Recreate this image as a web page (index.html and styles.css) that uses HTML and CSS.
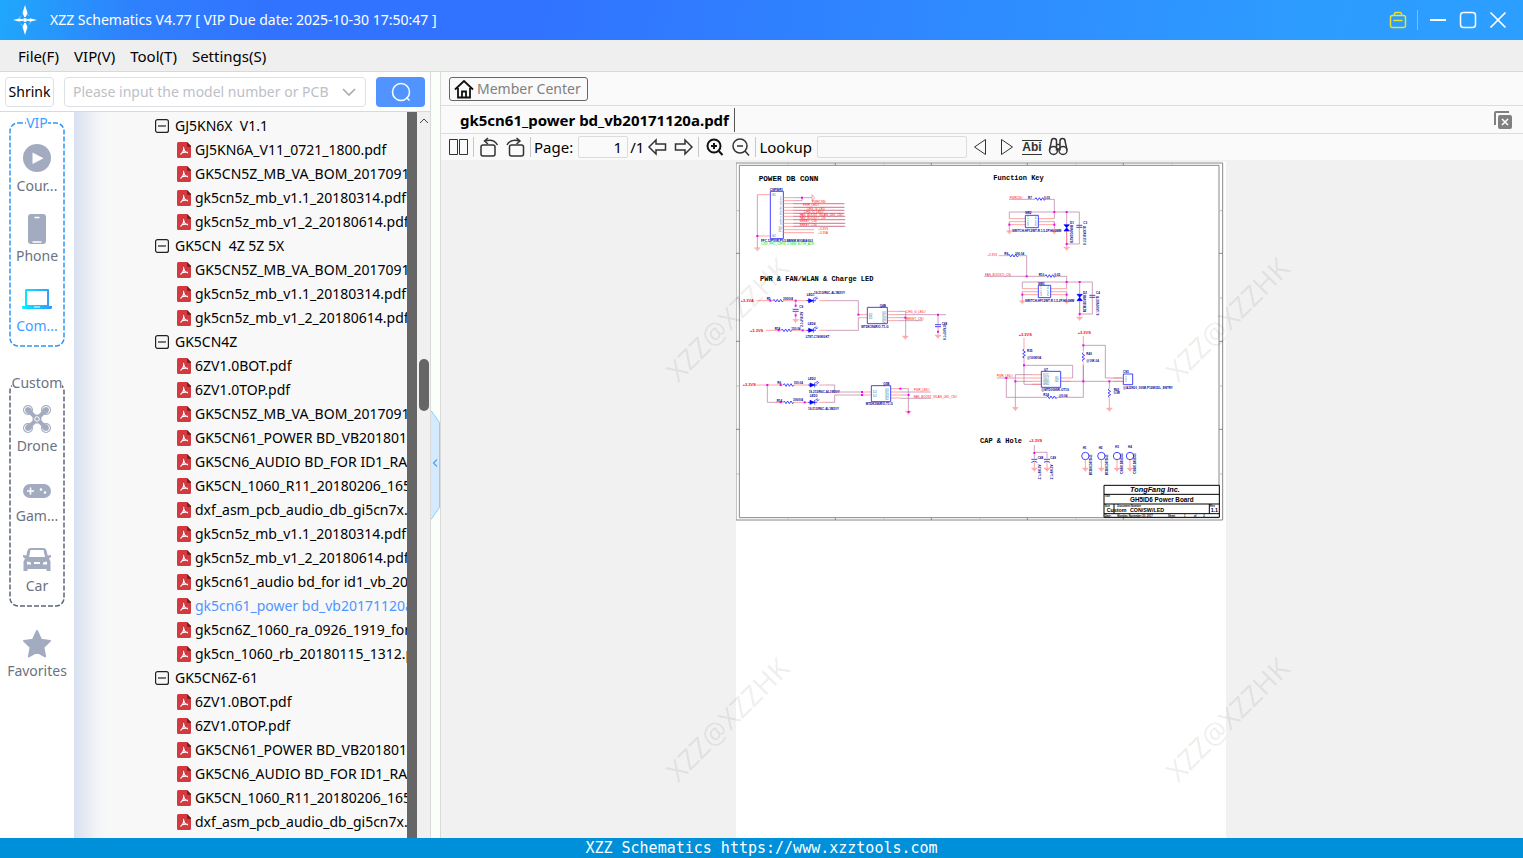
FILE: index.html
```html
<!doctype html>
<html lang="en">
  <head>
    <meta charset="utf-8">
    <meta name="viewport" content="width=device-width, initial-scale=1">
    <title>XZZ Schematics V4.77</title>
    <link rel="stylesheet" href="styles.css">
  </head>

  <body>
    <!-- shared icons -->
    <svg class="defs" width="0" height="0">
      <defs>
        <linearGradient id="cyan" x1="0" x2="1" y1="0" y2="0">
          <stop offset="0" stop-color="#00f0ff"/>
          <stop offset="1" stop-color="#3396ff"/>
        </linearGradient>
        <symbol id="pdf" viewBox="0 0 14 16">
          <path fill="#d23a41" d="M1.500 0H10l4 4v10.500a1.500 1.500 0 0 1-1.500 1.500h-11A1.500 1.500 0 0 1 0 14.500v-13A1.500 1.500 0 0 1 1.500 0z"/>
          <path fill="#8c1a20" d="M10 0l4 4v1h-3a1 1 0 0 1-1-1z"/>
          <path fill="none" stroke="#fff" stroke-width="1.100" d="M6.500 5c1 2-.5 5.500-3 7.500M6.800 6.500c.2 2 2 3.800 4 4.500M4.500 11c2-1 4-1.200 6.500-.6"/>
        </symbol>
        <symbol id="minus" viewBox="0 0 14 14">
          <rect x=".6" y=".6" width="12.800" height="12.800" rx="2" fill="#f8f8f8" stroke="#222" stroke-width="1.200"/>
          <path stroke="#222" stroke-width="1.200" d="M3 7h8"/>
        </symbol>
      </defs>
    </svg>

    <header class="titlebar">
      <svg class="logo" width="26" height="30" viewBox="0 0 26 30">
        <circle cx="13" cy="15" r="6" fill="none" stroke="#7fc8ff" stroke-width="1" stroke-dasharray="5 4"/>
        <path fill="#fff" d="M13 0l2.500 8-1.800 4h-1.400l-1.800-4zM13 30l2.500-8-1.800-4h-1.400l-1.800 4zM1 15l6-1.500 4 .8v1.400l-4 .8zM25 15l-6-1.500-4 .8v1.400l4 .8z"/>
        <circle cx="13" cy="15" r="2" fill="#fff"/>
      </svg>
      <span class="caption">XZZ Schematics V4.77 [ VIP Due date: 2025-10-30 17:50:47 ]</span>
      <button class="win" aria-label="License">
        <svg width="18" height="18" viewBox="0 0 18 18" fill="none" stroke="#e6e22e" stroke-width="1.500">
          <rect x="1.500" y="4.500" width="15" height="12" rx="2"/>
          <path d="M5.500 4.500V3a1.500 1.500 0 0 1 1.500-1.500h4A1.500 1.500 0 0 1 12.500 3v1.500M4.500 9.500h9"/>
        </svg>
      </button>
      <span class="winsep"></span>
      <button class="win" aria-label="Minimize">
        <svg width="18" height="18" stroke="#fff" stroke-width="2"><path d="M1 9h16"/></svg>
      </button>
      <button class="win" aria-label="Maximize">
        <svg width="18" height="18" fill="none" stroke="#fff" stroke-width="1.500"><rect x="1.500" y="1.500" width="15" height="15" rx="3"/></svg>
      </button>
      <button class="win" aria-label="Close">
        <svg width="18" height="18" stroke="#fff" stroke-width="1.700"><path d="M1.500 1.500l15 15M16.500 1.500l-15 15"/></svg>
      </button>
    </header>

    <nav class="menubar">
      <a href="#">File(F)</a>
      <a href="#">VIP(V)</a>
      <a href="#">Tool(T)</a>
      <a href="#">Settings(S)</a>
    </nav>

    <main class="main">
      <section class="left">
        <div class="search">
          <button class="shrink">Shrink</button>
          <div class="combo">
            <input type="text" aria-label="Model number" placeholder="Please input the model number or PCB">
            <svg width="14" height="8" fill="none" stroke="#a6a9b0" stroke-width="1.600"><path d="M1 1l6 6 6-6"/></svg>
          </div>
          <button class="go" aria-label="Search">
            <svg width="20" height="20" fill="none" stroke="#fff" stroke-width="1.500"><circle cx="10" cy="10" r="8.500"/><path d="M15.500 15.500l3 3"/></svg>
          </button>
        </div>

        <div class="browser">
          <aside class="sidebar">
            <div class="group vip">
              <svg class="frame"><rect/></svg>
              <span class="legend">VIP</span>
              <a class="item" href="#">
                <svg viewBox="0 0 32 32"><circle cx="16" cy="15" r="14" fill="#a2abbf"/><path fill="#fff" d="M11.500 9.500v11.500l11-5.750z"/></svg>
                Cour...
              </a>
              <a class="item" href="#">
                <svg viewBox="0 0 32 32"><rect x="7" y="1" width="18" height="30" rx="3" fill="#a2abbf"/><path stroke="#fff" stroke-width="1.400" stroke-linecap="round" d="M14 4.500h4M12 29h8"/></svg>
                Phone
              </a>
              <a class="item active" href="#">
                <svg viewBox="0 0 32 32"><path fill="url(#cyan)" fill-rule="evenodd" d="M5 6h22a1 1 0 0 1 1 1v16h3v2l-1 1H2l-1-1v-2h3V7a1 1 0 0 1 1-1zM6 8v14h20V8zM13 23.500v1h6v-1z"/></svg>
                Com...
              </a>
            </div>

            <div class="group custom">
              <svg class="frame"><rect/></svg>
              <span class="legend">Custom</span>
              <a class="item" href="#">
                <svg viewBox="0 0 32 32">
                  <g fill="#a2abbf"><circle cx="7" cy="7" r="5"/><circle cx="25" cy="7" r="5"/><circle cx="7" cy="25" r="5"/><circle cx="25" cy="25" r="5"/></g>
                  <path stroke="#a2abbf" stroke-width="4" d="M8 8l16 16M24 8L8 24"/>
                  <g fill="none" stroke="#fff"><circle cx="7" cy="7" r="3.500"/><circle cx="25" cy="7" r="3.500"/><circle cx="7" cy="25" r="3.500"/><circle cx="25" cy="25" r="3.500"/></g>
                  <g fill="#a2abbf"><circle cx="8" cy="8" r="3"/><circle cx="24" cy="8" r="3"/><circle cx="8" cy="24" r="3"/><circle cx="24" cy="24" r="3"/><circle cx="16" cy="16" r="4.500"/></g>
                  <circle cx="16" cy="16" r="2.300" fill="none" stroke="#fff"/>
                </svg>
                Drone
              </a>
              <a class="item" href="#">
                <svg viewBox="0 0 32 32"><rect x="2" y="11" width="28" height="14" rx="7" fill="#a2abbf"/><path stroke="#fff" stroke-width="1.600" d="M6 18h7M9.500 14.500v7"/><circle cx="20" cy="16.500" r="1.300" fill="#fff"/><circle cx="24" cy="19.500" r="1.300" fill="#fff"/></svg>
                Gam...
              </a>
              <a class="item" href="#">
                <svg viewBox="0 0 32 32"><path fill="#a2abbf" fill-rule="evenodd" d="M9.500 5h13a3 3 0 0 1 3 2.500l1.200 5 3.300-.5v2l-2 1.500 1.500 3V28h-4v-2h-19v2h-4v-9.500l1.500-3-2-1.500v-2l3.300.5 1.200-5a3 3 0 0 1 3-2.500zM9.500 7l-1.500 7h16l-1.500-7zM6 18.500v3h4v-2zM13 19v2h6v-2zM26 18.500v3h-4v-2z"/></svg>
                Car
              </a>
            </div>

            <a class="item favorites" href="#">
              <svg viewBox="0 0 32 32"><path fill="#a2abbf" stroke="#a2abbf" stroke-width="2" stroke-linejoin="round" d="M16 3l4 8.700 9 1.200-6.600 6.300 1.700 9.300L16 24l-8.100 4.500 1.700-9.300L3 12.900l9-1.200z"/></svg>
              Favorites
            </a>
          </aside>

          <ul class="tree">
            <li class="folder"><svg><use href="#minus"/></svg>GJ5KN6X&nbsp; V1.1</li>
            <li><svg><use href="#pdf"/></svg>GJ5KN6A_V11_0721_1800.pdf</li>
            <li><svg><use href="#pdf"/></svg>GK5CN5Z_MB_VA_BOM_20170914.pdf</li>
            <li><svg><use href="#pdf"/></svg>gk5cn5z_mb_v1.1_20180314.pdf</li>
            <li><svg><use href="#pdf"/></svg>gk5cn5z_mb_v1_2_20180614.pdf</li>
            <li class="folder"><svg><use href="#minus"/></svg>GK5CN&nbsp; 4Z 5Z 5X</li>
            <li><svg><use href="#pdf"/></svg>GK5CN5Z_MB_VA_BOM_20170914.pdf</li>
            <li><svg><use href="#pdf"/></svg>gk5cn5z_mb_v1.1_20180314.pdf</li>
            <li><svg><use href="#pdf"/></svg>gk5cn5z_mb_v1_2_20180614.pdf</li>
            <li class="folder"><svg><use href="#minus"/></svg>GK5CN4Z</li>
            <li><svg><use href="#pdf"/></svg>6ZV1.0BOT.pdf</li>
            <li><svg><use href="#pdf"/></svg>6ZV1.0TOP.pdf</li>
            <li><svg><use href="#pdf"/></svg>GK5CN5Z_MB_VA_BOM_20170914.pdf</li>
            <li><svg><use href="#pdf"/></svg>GK5CN61_POWER BD_VB20180115.pdf</li>
            <li><svg><use href="#pdf"/></svg>GK5CN6_AUDIO BD_FOR ID1_RA.pdf</li>
            <li><svg><use href="#pdf"/></svg>GK5CN_1060_R11_20180206_1655.pdf</li>
            <li><svg><use href="#pdf"/></svg>dxf_asm_pcb_audio_db_gi5cn7x.pdf</li>
            <li><svg><use href="#pdf"/></svg>gk5cn5z_mb_v1.1_20180314.pdf</li>
            <li><svg><use href="#pdf"/></svg>gk5cn5z_mb_v1_2_20180614.pdf</li>
            <li><svg><use href="#pdf"/></svg>gk5cn61_audio bd_for id1_vb_2017.pdf</li>
            <li class="current"><svg><use href="#pdf"/></svg>gk5cn61_power bd_vb20171120a.pdf</li>
            <li><svg><use href="#pdf"/></svg>gk5cn6Z_1060_ra_0926_1919_for.pdf</li>
            <li><svg><use href="#pdf"/></svg>gk5cn_1060_rb_20180115_1312.pdf</li>
            <li class="folder"><svg><use href="#minus"/></svg>GK5CN6Z-61</li>
            <li><svg><use href="#pdf"/></svg>6ZV1.0BOT.pdf</li>
            <li><svg><use href="#pdf"/></svg>6ZV1.0TOP.pdf</li>
            <li><svg><use href="#pdf"/></svg>GK5CN61_POWER BD_VB20180115.pdf</li>
            <li><svg><use href="#pdf"/></svg>GK5CN6_AUDIO BD_FOR ID1_RA.pdf</li>
            <li><svg><use href="#pdf"/></svg>GK5CN_1060_R11_20180206_1655.pdf</li>
            <li><svg><use href="#pdf"/></svg>dxf_asm_pcb_audio_db_gi5cn7x.pdf</li>
          </ul>
          <div class="darkbar"></div>
          <div class="scroll">
            <svg width="10" height="6" fill="none" stroke="#444"><path d="M1 5l4-4 4 4"/></svg>
            <div class="thumb"></div>
          </div>
        </div>
      </section>

      <div class="splitter">
        <svg class="handle" width="9" height="110">
          <path fill="#d6eafe" stroke="#93caff" d="M0 .5l8.500 12v85L0 109.500"/>
          <path fill="none" stroke="#4aa3f5" stroke-width="1.200" d="M6 49.500l-3.500 3.500 3.500 3.500"/>
        </svg>
      </div>

      <section class="right">
        <div class="member">
          <button>
            <svg width="20" height="20" fill="none" stroke="#111" stroke-width="1.800"><path d="M1 10.500L10 2l9 8.500M4 9v9.500h12V9M8 18.500v-6h4v6"/></svg>
            Member Center
          </button>
        </div>

        <div class="tabs">
          <a class="tab" href="#">gk5cn61_power bd_vb20171120a.pdf</a>
          <button class="closeall" aria-label="Close all">
            <svg width="20" height="20"><path fill="none" stroke="#808080" stroke-width="2" d="M2 15V3a1 1 0 0 1 1-1h13"/><rect x="5" y="5" width="14" height="14" rx="2" fill="#808080"/><path stroke="#fff" stroke-width="1.600" d="M9 9l6 6M15 9l-6 6"/></svg>
          </button>
        </div>

        <div class="toolbar">
          <button aria-label="Two pages"><svg><path d="M1.500 2.500h8v15h-8zM11.500 2.500h8v15h-8z"/></svg></button>
          <span class="sep"></span>
          <button aria-label="Rotate left"><svg class="bold"><rect x="2" y="8" width="14" height="11" rx="2"/><path d="M6 4c5-1.500 10-.5 12.500 4M9 1L5.500 4 9 7"/></svg></button>
          <button aria-label="Rotate right"><svg class="bold"><rect x="4.500" y="8" width="14" height="11" rx="2"/><path d="M14.500 4C9.500 2.500 4.500 3.500 2 8M11.500 1L15 4l-3.500 3"/></svg></button>
          <span class="sep"></span>
          <label for="page">Page:</label>
          <input id="page" class="page" type="text" value="1">
          <span>/1</span>
          <button aria-label="Previous page"><svg class="bold"><path d="M2 10l7-7v4h9.500v6H9v4z"/></svg></button>
          <button aria-label="Next page"><svg class="bold"><path d="M19 10l-7-7v4H2.500v6H12v4z"/></svg></button>
          <span class="sep"></span>
          <button aria-label="Zoom in"><svg class="heavy"><circle cx="10" cy="9" r="6.500"/><path d="M14.800 14l3.700 4M7 9h6M10 6v6"/></svg></button>
          <button aria-label="Zoom out"><svg class="bold"><circle cx="10" cy="9" r="7"/><path d="M15 14l4 4.500M7 9h6"/></svg></button>
          <span class="sep"></span>
          <label for="lookup">Lookup</label>
          <input id="lookup" class="lookup" type="text">
          <button aria-label="Find previous"><svg><path d="M15.500 2.500v15l-11-7.500z"/></svg></button>
          <button aria-label="Find next"><svg><path d="M5.500 2.500v15l11-7.500z"/></svg></button>
          <button class="abi">Abi</button>
          <button aria-label="Find all"><svg class="bold"><circle cx="5.500" cy="13.500" r="4"/><circle cx="15" cy="13.500" r="4"/><path d="M1.500 13L3.500 4a2 2 0 0 1 5 0v9.500M19 13l-2-9a2 2 0 0 0-5 0v9.500M8.500 7.500H12M8.500 12H12"/></svg></button>
        </div>

        <div class="viewer">
          <div class="sheet">
            <svg class="schematic" viewBox="0 0 1470 1077">
              <defs>
                <path id="gnd" class="r" d="M-9 0H9M-6 3H6M-3 6H3M-1 9H1"/>
                <path id="res" class="b" d="M0 0l3-4 5 8 5-8 5 8 5-8 5 8 3-4"/>
                <path id="vres" class="b" d="M0 0l-4 3 8 5-8 5 8 5-8 5 4 3"/>
                <path id="dot" fill="#f0f" d="M-3-3h6v6h-6z"/>
                <path id="led" fill="#00f" stroke="#00f" stroke-width="2" d="M-8-6V6L5 0zM6-7V7M-14 0H14M8-7l8-4M12-4l8-4"/>
                <path id="tvs" fill="#00f" stroke="#00f" stroke-width="2" d="M-8-9H8L0 0 8 10H-8L0 0z"/>
                <path id="cap" class="b" d="M-9-3H9M-9 3H9"/>
                <path id="hole" class="b" d="M-11 0a11 11 0 1 0 22 0a11 11 0 1 0-22 0"/>
              </defs>

              <!-- sheet border -->
              <path class="frameline" d="M0 3H1460V1074H0zM10 10H1449V1067H10z"/>
              <path class="frameline" d="M298 3v7M586 3v7M874 3v7M1162 3v7M298 1067v7M586 1067v7M874 1067v7M1162 1067v7M0 274h10M0 538h10M0 802h10M1449 274h11M1449 538h11M1449 802h11"/>
              <path class="tick" d="M155 3v5M443 3v5M732 3v5M1020 3v5M1308 3v5M155 1069v5M443 1069v5M732 1069v5M1020 1069v5M1308 1069v5M2 146h6M2 408h6M2 672h6M2 936h6M1452 146h6M1452 408h6M1452 672h6M1452 936h6"/>

              <!-- connector and led circuits -->
              <g transform="translate(0 -6)">
                <text class="h big" x="68" y="62">POWER DB CONN</text>
                <text class="t" x="102" y="92">CNPWR1</text>
                <path class="b" d="M103 94h39v142h-39z"/>
                <path class="r" d="M64 104h39M64 228h39M142 113h30M142 122h30M142 131h182M142 142h182M142 151h182M142 160h182M142 169h184M142 179h184M142 190h184M142 199h184M142 209h92M142 218h92M228 104v18l8-9z"/>
                <path class="w" d="M64 104v160M172 113h56M172 122h26v-9M172 131h154M172 142h154M172 151h154M172 160h154M172 169h156M172 179h156M172 190h156M172 199h156"/>
                <use href="#dot" x="198" y="113"/><use href="#dot" x="64" y="228"/><use href="#gnd" x="64" y="264"/>
                <g class="tr">
                  <text x="228" y="130">PWRCNN</text><text x="201" y="139">PWR_LED#</text><text x="212" y="149">CHG_G_LED</text><text x="204" y="158">CHG_O_LED#</text>
                  <text x="191" y="168">FAN_BOOST_WLAN_LED_CN#</text><text x="191" y="177">FAN_BOOST#_CN</text><text x="191" y="187">BRKEY_CN#</text><text x="191" y="197">BRKEY_CN#</text><text x="247" y="211">+3.3VS</text><text x="247" y="221">+3.3VA</text>
                </g>
                <g class="tc"><text x="107" y="107">G1</text><text x="107" y="231">G2</text><text x="131" y="116">1</text><text x="131" y="126">2</text><text x="131" y="136">3</text><text x="131" y="146">4</text><text x="131" y="156">5</text><text x="131" y="166">6</text><text x="131" y="176">7</text><text x="131" y="186">8</text><text x="131" y="196">9</text><text x="127" y="206">10</text><text x="127" y="216">11</text></g>
                <text class="t" x="75" y="245">FFC.12PX0R.P0.5.BBMM.W/GBA0G2</text>
                <text class="tg" x="75" y="255">C/8V_FPC_12PIN_0.5MM_BOTH_ACE</text>

                <text class="h" x="72" y="362">PWR &amp; FAN/WLAN &amp; Charge LED</text>
                <path class="r" d="M62 422h50M142 422h80M250 422h20M90 511h45M166 511h55M250 511h20M367 464h27M367 473h27M454 454h30M454 464h30M454 473h30M454 482h30"/>
                <path class="w" d="M270 422h97v42M270 511h97v-38M484 454h25v75M484 464h146M484 473h25M484 482h76M179 422v20M606 464v30"/>
                <use href="#res" x="111" y="422"/><use href="#res" x="136" y="511"/><use href="#led" x="226" y="422"/><use href="#led" x="226" y="511"/>
                <use href="#cap" x="179" y="451"/><use href="#cap" x="606" y="497"/>
                <path class="r" d="M179 454v24M606 500v24"/>
                <use href="#gnd" x="179" y="479"/><use href="#gnd" x="606" y="526"/><use href="#gnd" x="508" y="529"/>
                <use href="#dot" x="179" y="422"/><use href="#dot" x="179" y="437"/><use href="#dot" x="179" y="466"/><use href="#dot" x="103" y="422"/><use href="#dot" x="128" y="511"/><use href="#dot" x="200" y="511"/><use href="#dot" x="367" y="464"/><use href="#dot" x="508" y="473"/><use href="#dot" x="606" y="464"/><use href="#dot" x="606" y="515"/>
                <path class="b" d="M394 442h60v49h-60z"/>
                <g class="t"><text x="92" y="421">R5</text><text x="141" y="420">300/0/4</text><text x="212" y="408">LED1</text><text x="234" y="401">19-213/R6C-AL1M2VY</text><text x="116" y="509">R18</text><text x="166" y="509">150.04</text><text x="215" y="496">LED4</text><text x="209" y="534">LTST-C190KGKT</text><text x="431" y="441">Q4B</text><text x="376" y="503">MTDK3S6R/O-T1-G</text><text x="617" y="494">C48</text>
                  <text transform="translate(200 500) rotate(-90)">2.1uF/6.3V</text><text x="190" y="444">C9</text><text transform="translate(629 540) rotate(-90)">0.1u/10V-X</text></g>
                <g class="tc"><text x="398" y="468">D2</text><text x="398" y="478">D1</text><text x="438" y="461">G1</text><text x="438" y="470">S1</text><text x="438" y="479">G2</text><text x="438" y="488">S2</text></g>
                <g class="tr"><text x="510" y="460">CHG_G_LED#</text><text x="510" y="480">BRKEY_CN#</text></g>
                <text class="v" x="14" y="426">+3.3VA</text><text class="v" x="42" y="515">+3.3VS</text>
              </g>

              <g transform="translate(0 534)">
                <path class="r" d="M62 135h80M172 135h45M250 135h20M120 187h22M172 187h45M250 187h20M378 156h28M378 165h28M464 146h30M464 156h30M464 165h30M464 174h30"/>
                <path class="w" d="M94 135v52h30M270 135h26v21h82M270 187h26v-22h82M494 146h23v70M494 156h90M494 165h24M494 175h91"/>
                <use href="#res" x="142" y="135"/><use href="#res" x="142" y="187"/><use href="#led" x="230" y="135"/><use href="#led" x="230" y="187"/>
                <use href="#gnd" x="517" y="214"/>
                <use href="#dot" x="94" y="135"/><use href="#dot" x="134" y="135"/><use href="#dot" x="134" y="187"/><use href="#dot" x="206" y="187"/><use href="#dot" x="378" y="156"/><use href="#dot" x="378" y="165"/><use href="#dot" x="493" y="146"/><use href="#dot" x="518" y="165"/><use href="#dot" x="518" y="216"/>
                <path class="b" d="M406 137h58v48h-58z"/>
                <g class="t"><text x="124" y="133">R6</text><text x="173" y="133">100.04</text><text x="216" y="119">LED2</text><text x="218" y="158">19-213/R6C-AL1M2VY</text><text x="221" y="172">LED3</text><text x="216" y="210">19-213/R6C-AL1M2VY</text><text x="122" y="185">R14</text><text x="171" y="184">300/0/4</text><text x="442" y="136">Q5B</text><text x="389" y="196">MTDK3S6R/O-T1-G</text></g>
                <g class="tc"><text x="411" y="160">D2</text><text x="411" y="170">D1</text><text x="447" y="153">G1</text><text x="447" y="162">S1</text><text x="447" y="171">G2</text><text x="447" y="180">S2</text></g>
                <g class="tr"><text x="533" y="154">PWR_LED#</text><text x="533" y="174">FAN_BOOST_WLAN_LED_CN#</text></g>
                <text class="v" x="20" y="139">+3.3VS</text>
              </g>

              <!-- function keys -->
              <g transform="translate(702 -6)">
                <text class="h" x="70" y="59">Function Key</text>
                <path class="w" d="M117 118h78M226 118h27v38M118 176v-20h210v96h-38M253 156v20M118 215v-31M253 215v-31M290 156v36M290 214v46"/>
                <path class="r" d="M118 176h48M118 185h48M118 194h48M205 176h48M205 185h48M205 194h48M290 214v36"/>
                <path class="b" d="M166 166h39v37h-39z"/>
                <use href="#res" x="195" y="117"/><use href="#tvs" x="290" y="203"/><use href="#cap" x="328" y="199"/>
                <use href="#gnd" x="118" y="213"/><use href="#gnd" x="253" y="213"/><use href="#gnd" x="290" y="262"/>
                <use href="#dot" x="253" y="156"/><use href="#dot" x="290" y="156"/><use href="#dot" x="118" y="194"/><use href="#dot" x="253" y="194"/><use href="#dot" x="290" y="252"/>
                <g class="t"><text x="174" y="116">R7</text><text x="222" y="116">0.05</text><text x="165" y="163">SW2</text><text x="126" y="217">SWITCH-HF12WT-R.1-5.2P.H0.0MM</text><text x="300" y="192">D1</text><text x="340" y="192">C3</text>
                  <text transform="translate(310 248) rotate(-90)">BZM5D5V0B</text><text transform="translate(348 255) rotate(-90)">0.1U/16V/X7R</text></g>
                <text class="tr" x="119" y="116">PWRCN#</text>
                <g class="tc"><text x="171" y="178">1</text><text x="171" y="188">2</text><text x="171" y="198">3</text><text x="194" y="178">4</text><text x="194" y="188">5</text><text x="194" y="198">6</text></g>

                <path class="w" d="M144 287h26v62M43 349h182M256 349h34v17M157 386v-20h210v96h-38M290 366v20M157 425v-31M290 425v-31M329 366v36M329 424v46"/>
                <path class="r" d="M86 287h28M157 386h48M157 395h48M157 404h48M242 386h48M242 395h48M242 404h48M329 424v36"/>
                <path class="b" d="M205 376h37v37h-37z"/>
                <use href="#res" x="114" y="287"/><use href="#res" x="225" y="348"/><use href="#tvs" x="329" y="412"/><use href="#cap" x="367" y="409"/>
                <use href="#gnd" x="157" y="423"/><use href="#gnd" x="290" y="423"/><use href="#gnd" x="329" y="472"/>
                <use href="#dot" x="170" y="349"/><use href="#dot" x="290" y="366"/><use href="#dot" x="329" y="366"/><use href="#dot" x="157" y="404"/><use href="#dot" x="290" y="404"/><use href="#dot" x="329" y="462"/>
                <g class="t"><text x="103" y="286">R9</text><text x="135" y="285">300.04</text><text x="206" y="347">R10</text><text x="253" y="347">0.05</text><text x="204" y="374">SW3</text><text x="165" y="427">SWITCH-HF12WT-R.1-5.2P.H0.0MM</text><text x="339" y="402">D2</text><text x="378" y="402">C4</text>
                  <text transform="translate(349 457) rotate(-90)">BZM5D5V0B</text><text transform="translate(386 466) rotate(-90)">0.1U/16V/X7R</text></g>
                <g class="tr"><text x="52" y="289">+3.3VS</text><text x="45" y="347">FAN_BOOST#_CN</text></g>
                <g class="tc"><text x="210" y="388">1</text><text x="210" y="398">2</text><text x="210" y="408">3</text><text x="231" y="388">4</text><text x="231" y="398">5</text><text x="231" y="408">6</text></g>
              </g>

              <!-- sensor, caps, holes and title block -->
              <g transform="translate(702 504)">
                <path class="w" d="M162 82v81h52M162 106h146v38M136 134h50M136 134v98M109 144v58h120M262 202h78v-96M340 106v48M340 46h66v98h50M272 154h188M418 154v20M340 46v18M80 144h54M136 154h50M193 345v22h38v18M193 367v18"/>
                <path class="r" d="M162 24v34M340 18v28M186 134h28M134 144h80M186 154h28M186 163h28M272 144h36M272 154h30M430 144h30M430 154h30M418 204v30M340 98v12M193 396v18M231 396v18M346 390v24M394 390v24M441 390v24M480 390v24"/>
                <use href="#vres" x="162" y="58"/><use href="#vres" x="340" y="68"/><use href="#vres" x="418" y="176"/><use href="#res" x="230" y="202"/>
                <path class="b" d="M214 124h58v48h-58zM460 132h28v32h-28zM184 388h18M184 397q9-7 18 0M222 388h18M222 397q9-7 18 0"/>
                <use href="#hole" x="346" y="378"/><use href="#hole" x="394" y="378"/><use href="#hole" x="441" y="378"/><use href="#hole" x="480" y="378"/>
                <use href="#gnd" x="136" y="233"/><use href="#gnd" x="418" y="235"/><use href="#gnd" x="193" y="415"/><use href="#gnd" x="231" y="415"/><use href="#gnd" x="346" y="415"/><use href="#gnd" x="394" y="415"/><use href="#gnd" x="441" y="415"/><use href="#gnd" x="480" y="415"/>
                <use href="#dot" x="162" y="106"/><use href="#dot" x="109" y="144"/><use href="#dot" x="136" y="154"/><use href="#dot" x="340" y="46"/><use href="#dot" x="340" y="154"/><use href="#dot" x="418" y="154"/><use href="#dot" x="193" y="369"/>
                <g class="t"><text x="171" y="66">R35</text><text x="171" y="86">@100K/04</text><text x="349" y="76">R40</text><text x="349" y="95">@10K.04</text><text x="222" y="123">U7</text><text x="214" y="184">@MTD009SR-OT1G</text><text x="220" y="198">R34</text><text x="266" y="200">@0.04</text><text x="459" y="129">CN1</text><text x="459" y="176">@AJ2N10_300M.P12MODL_ENTRY</text><text x="431" y="183">R42</text><text x="431" y="193">0.0R</text><text x="203" y="386">C48</text><text x="241" y="386">C49</text><text x="338" y="357">H1</text><text x="386" y="357">H2</text><text x="435" y="355">H3</text><text x="474" y="355">H4</text>
                  <text transform="translate(212 448) rotate(-90)">2.1uF/6.3V</text><text transform="translate(250 448) rotate(-90)">2.1uF/6.3V</text><text transform="translate(365 436) rotate(-90)">BCB81D87D45</text><text transform="translate(413 436) rotate(-90)">BCB81D87D45</text><text transform="translate(460 431) rotate(-90)">CB081D85D45</text><text transform="translate(499 431) rotate(-90)">CB081D85D45</text></g>
                <g class="tc"><text x="218" y="137">VCC</text><text x="218" y="147">OUT</text><text x="218" y="157">GND</text><text x="218" y="166">GND</text><text x="254" y="147">G1</text><text x="254" y="157">G2</text><text x="465" y="146">1</text><text x="465" y="156">2</text></g>
                <text class="tr" x="80" y="142">PWR_LED#</text>
                <text class="v" x="146" y="17">+3.3VS</text><text class="v" x="323" y="11">+3.3VS</text><text class="v" x="177" y="335">+3.3VS</text>
                <text class="h" x="30" y="338">CAP &amp; Hole</text>

                <path fill="#fff" stroke="#000" stroke-width="3" d="M402 466h346v96H402zM402 493h346M402 522h346M402 551h346M432 522v29M718 522v29"/>
                <g class="tb">
                  <text class="company" x="480" y="487">TongFang Inc.</text>
                  <text x="480" y="515">GH5ID6 Power Board</text>
                  <text class="small" x="410" y="546">Custom</text>
                  <text class="small" x="480" y="546">CON/SW/LED</text>
                  <text class="small" x="722" y="545">1.1</text>
                  <g class="tiny"><text x="404" y="501">Title</text><text x="404" y="530">Size</text><text x="442" y="530">Document Number</text><text x="720" y="530">Rev</text><text x="404" y="560">Date:</text><text x="442" y="560">Monday, November 20, 2017</text><text x="594" y="560">Sheet</text><text x="642" y="560">1</text><text x="672" y="560">of</text><text x="700" y="560">2</text></g>
                </g>
              </g>
            </svg>
          </div>
          <span class="mark m1">XZZ@XZZHK</span>
          <span class="mark m2">XZZ@XZZHK</span>
          <span class="mark m3">XZZ@XZZHK</span>
          <span class="mark m4">XZZ@XZZHK</span>
        </div>
      </section>
    </main>

    <footer class="status">XZZ Schematics https://www.xzztools.com</footer>
  </body>
</html>
```
FILE: styles.css
```css
* {
  box-sizing: border-box;
}

body {
  margin: 0;
  height: 100vh;
  display: flex;
  flex-direction: column;
  overflow: hidden;
  font-family: "Noto Sans", sans-serif;
  font-size: 15px;
  line-height: 24px;
  color: #000;
  background: #fff;
}

button, input {
  font: inherit;
  color: inherit;
}

button {
  display: flex;
  align-items: center;
  justify-content: center;
  padding: 0;
  border: 0;
  background: none;
}

a {
  color: inherit;
  text-decoration: none;
}

.defs {
  position: absolute;
}

/* title bar */

.titlebar {
  display: flex;
  align-items: center;
  height: 40px;
  padding: 0 10px 0 12px;
  color: #fff;
  background: linear-gradient(100deg, #1fa8fb 0, #2f80fd 9%, #3173ff 18%, #3173ff 35%, #2d9cff 85%, #2b9fff 100%);
}

.titlebar .caption {
  flex: 1;
  margin-left: 12px;
  font-size: 14px;
}

.win {
  width: 30px;
  height: 30px;
}

.winsep {
  width: 1px;
  height: 20px;
  margin: 0 5px 0 4px;
  background: #7cbcff;
}

/* menu */

.menubar {
  display: flex;
  align-items: center;
  gap: 15px;
  height: 32px;
  padding-left: 18px;
  background: #efefef;
  border-bottom: 1px solid #d9d9d9;
}

.main {
  flex: 1;
  min-height: 0;
  display: flex;
}

.left {
  display: flex;
  flex-direction: column;
  width: 430px;
  flex: none;
}

/* search row */

.search {
  display: flex;
  align-items: center;
  gap: 10px;
  height: 40px;
  padding: 0 5px;
  border-bottom: 1px solid #d9d9d9;
}

.shrink {
  width: 49px;
  height: 30px;
  font-size: 14px;
  border: 1px solid #dcdfe6;
  border-radius: 4px;
  background: #fff;
}

.combo {
  flex: 1;
  display: flex;
  align-items: center;
  height: 30px;
  padding: 0 9px 0 8px;
  border: 1px solid #dcdfe6;
  border-radius: 4px;
}

.combo input {
  flex: 1;
  min-width: 0;
  padding: 0;
  border: 0;
  outline: 0;
  font-size: 14px;
  background: none;
}

.combo input::placeholder {
  color: #bdc0c6;
}

.go {
  width: 49px;
  height: 30px;
  border-radius: 4px;
  background: #5294ff;
}

.browser {
  flex: 1;
  min-height: 0;
  display: flex;
}

/* category sidebar */

.sidebar {
  width: 74px;
  flex: none;
  padding: 10px 0 0 9px;
  color: #6b7280;
  font-size: 14px;
  line-height: 22px;
}

.group {
  position: relative;
  display: flex;
  flex-direction: column;
  align-items: center;
  gap: 16px;
  width: 56px;
  padding: 21px 0 10px;
}

.group.custom {
  margin-top: 35px;
}

.frame {
  position: absolute;
  top: 0;
  left: 0;
  width: 100%;
  height: 100%;
}

.frame rect {
  x: 1px;
  y: 1px;
  width: calc(100% - 2px);
  height: calc(100% - 2px);
  rx: 8px;
  fill: none;
  stroke: #5c6577;
  stroke-width: 1.5px;
  stroke-dasharray: 5 2;
}

.vip .frame rect {
  stroke: #2f96f3;
}

.legend {
  position: absolute;
  top: -10px;
  background: #fff;
}

.vip .legend {
  color: #409eff;
}

.item {
  position: relative;
  display: flex;
  flex-direction: column;
  align-items: center;
}

.item svg {
  width: 32px;
  height: 32px;
}

.item.active {
  color: #409eff;
}

.favorites {
  width: 56px;
  margin-top: 21px;
}

/* file tree */

.tree {
  flex: 1;
  min-width: 0;
  margin: 0;
  padding: 2px 0 0 103px;
  overflow: hidden;
  list-style: none;
  white-space: nowrap;
  font-size: 14px;
  background: linear-gradient(90deg, #d8e1f1 0, #e6eaf2 12px, #f3f5f7 24px, #f8f8f8 34px);
}

.tree li {
  display: flex;
  align-items: center;
  gap: 4px;
  height: 24px;
}

.tree li svg {
  flex: none;
  width: 14px;
  height: 16px;
}

.tree .folder {
  gap: 6px;
  margin-left: -22px;
}

.tree .current {
  color: #5294ff;
}

.darkbar {
  width: 10px;
  background: #666;
}

.scroll {
  width: 13px;
  padding: 6px 0 0 2px;
  background: #f0f0f0;
}

.scroll svg {
  display: block;
}

.thumb {
  width: 10px;
  height: 52px;
  margin-top: 235px;
  border-radius: 5px;
  background: #666;
}

.splitter {
  position: relative;
  width: 11px;
  flex: none;
  background: #fafffa;
  border: solid #dadada;
  border-width: 0 1px;
}

.handle {
  position: absolute;
  top: 338px;
  left: 0;
}

/* document side */

.right {
  flex: 1;
  min-width: 0;
  display: flex;
  flex-direction: column;
  background: #fafafa;
}

.member {
  display: flex;
  align-items: center;
  height: 34px;
  padding-left: 8px;
  border-bottom: 1px solid #dcdcdc;
}

.member button {
  gap: 3px;
  height: 24px;
  padding: 0 6px 0 4px;
  font-size: 14px;
  color: #808080;
  border: 1px solid #666;
  border-radius: 3px;
}

.tabs {
  display: flex;
  align-items: center;
  justify-content: space-between;
  height: 28px;
  padding: 0 10px;
  border-bottom: 1px solid #dcdcdc;
}

.tab {
  padding: 0 5px 0 9px;
  font-weight: bold;
  border-right: 1px solid #555;
}

.toolbar {
  display: flex;
  align-items: center;
  height: 26px;
  padding-left: 4px;
}

.toolbar button {
  width: 20px;
  height: 20px;
  margin: 0 3px;
}

.toolbar svg {
  width: 20px;
  height: 20px;
  fill: none;
  stroke: #333;
  stroke-width: 1px;
  overflow: visible;
}

.toolbar svg.bold {
  stroke-width: 1.5px;
}

.toolbar svg.heavy {
  stroke: #111;
  stroke-width: 2px;
}

.toolbar .sep {
  width: 1px;
  height: 20px;
  margin: 0 2px;
  background: #c8c8c8;
}

.toolbar label {
  padding: 0 1px;
}

.toolbar input {
  height: 22px;
  margin: 0 2px 0 4px;
  border: 1px solid #dcdcdc;
  border-radius: 2px;
  background: #fafafa;
}

.toolbar .page {
  width: 50px;
  padding: 0 5px;
  text-align: right;
}

.toolbar .lookup {
  width: 150px;
  margin-right: 0;
}

.toolbar .abi {
  height: 15px;
  font-family: "Liberation Sans", sans-serif;
  font-size: 12px;
  font-weight: bold;
  color: #333;
  border: solid #333;
  border-width: 1px 0;
}

.viewer {
  position: relative;
  flex: 1;
  min-height: 0;
  padding: 2px 2px 0 0;
  overflow: hidden;
  background: #f1f1f1;
}

.sheet {
  width: 490px;
  height: 100%;
  margin: 0 auto;
  background: #fff;
}

.mark {
  position: absolute;
  width: 200px;
  line-height: 40px;
  text-align: center;
  font-size: 28px;
  color: rgba(0, 0, 0, 0.08);
  transform: rotate(-45deg);
}

.m1, .m3 {
  left: 186px;
}

.m2, .m4 {
  left: 686px;
}

.m1, .m2 {
  top: 139px;
}

.m3, .m4 {
  top: 539px;
}

/* schematic drawing */

.schematic {
  display: block;
  width: 100%;
  font-family: "Liberation Sans", sans-serif;
}

.schematic .r {
  fill: none;
  stroke: #f77;
  stroke-width: 2;
}

.schematic .b {
  fill: none;
  stroke: #44f;
  stroke-width: 3;
}

.schematic .w {
  fill: none;
  stroke: #b5729a;
  stroke-width: 2;
}

.frameline {
  fill: none;
  stroke: #888;
  stroke-width: 3;
}

.tick {
  stroke: #bbb;
  stroke-width: 3;
}

.schematic .h {
  font: bold 21px "Liberation Mono", monospace;
}

.schematic .big {
  font-size: 23px;
}

.schematic .t {
  font-size: 9px;
  font-weight: bold;
  fill: #00008b;
}

.schematic .tg {
  font-size: 9px;
  fill: #0d0;
}

.schematic .tr {
  font-size: 9px;
  fill: #f22;
}

.schematic .tc {
  font-size: 9px;
  fill: #2a7a9c;
}

.schematic .v {
  font-size: 12px;
  font-weight: bold;
  fill: #f00;
}

.tb {
  font-size: 19px;
  font-weight: bold;
}

.tb .company {
  font-size: 22px;
  font-style: italic;
}

.tb .small {
  font-size: 16px;
}

.tb .tiny {
  font-size: 8px;
}

.status {
  height: 20px;
  line-height: 20px;
  text-align: center;
  font-family: "DejaVu Sans Mono", monospace;
  font-size: 15px;
  color: #fff;
  background: #0090da;
}
```
